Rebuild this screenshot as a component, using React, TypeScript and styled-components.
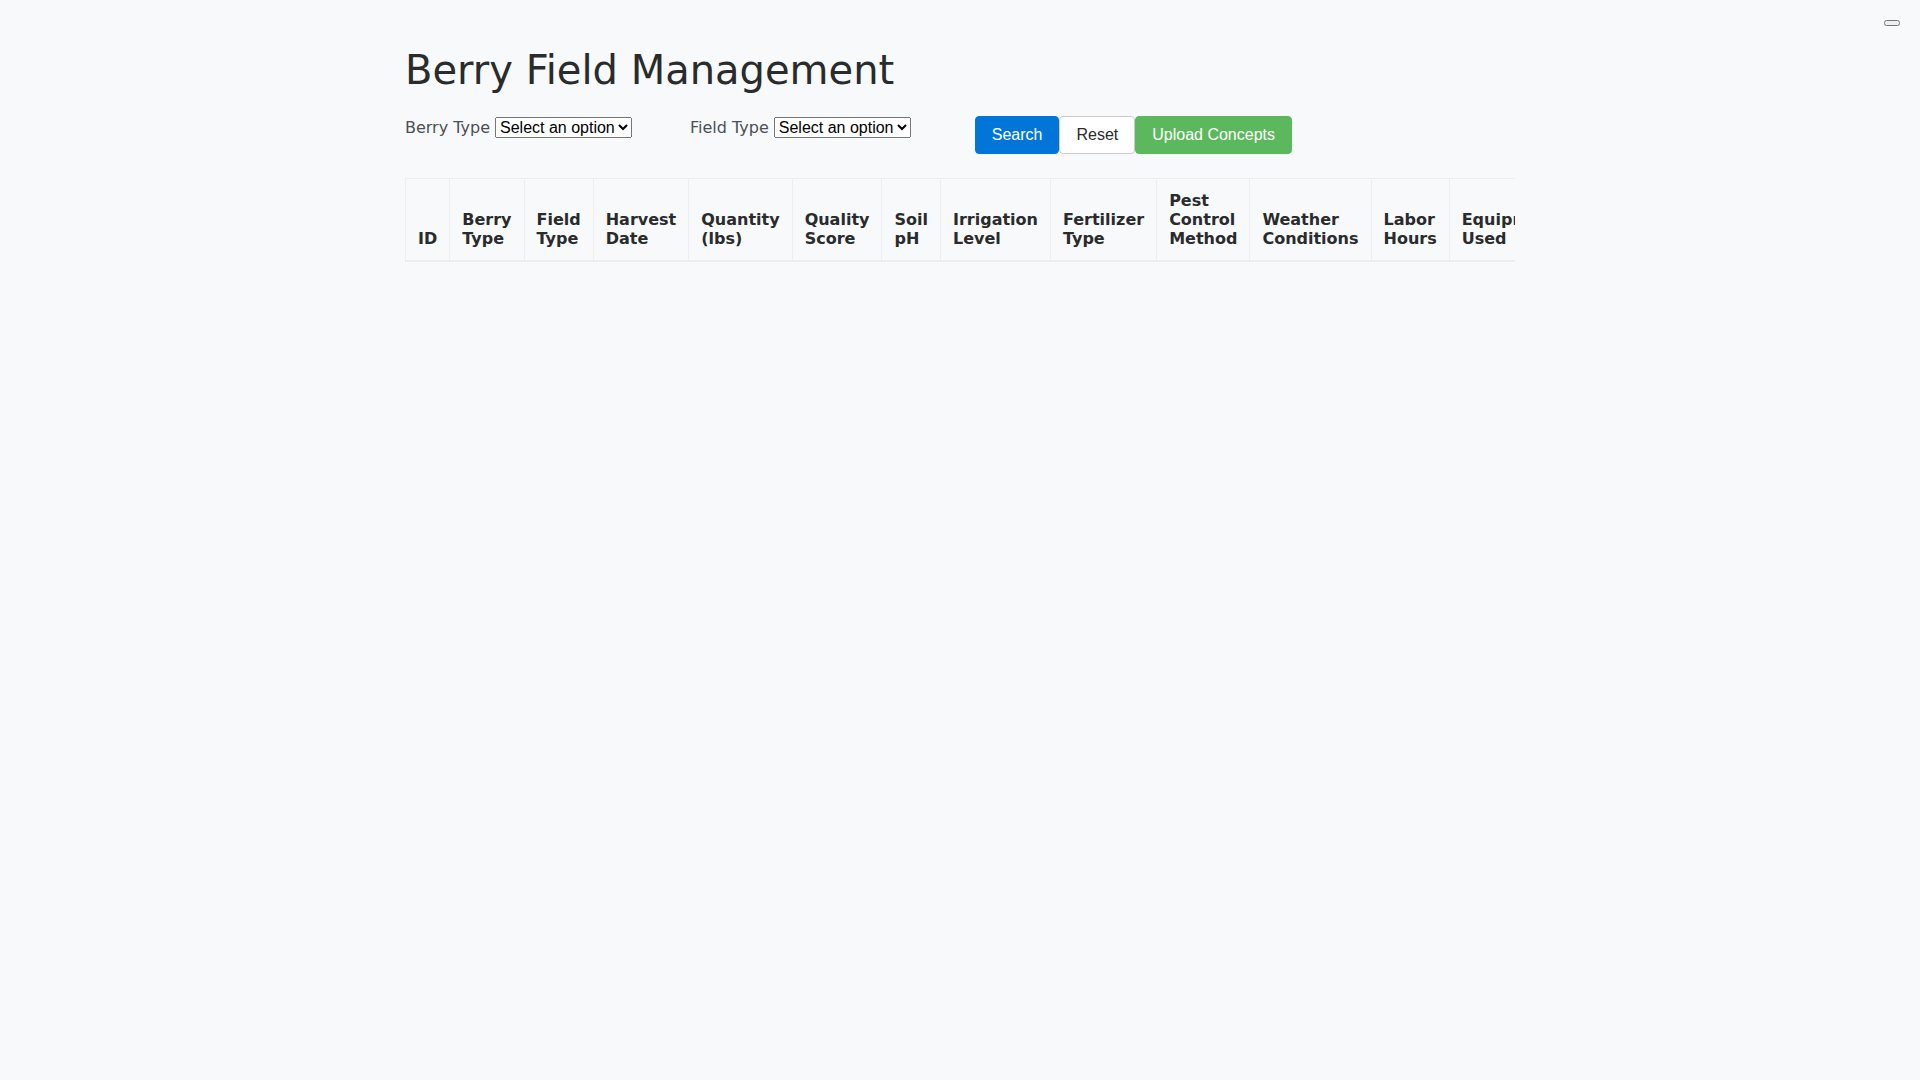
import React from "react";
import styled, { createGlobalStyle } from "styled-components";

const GlobalStyle = createGlobalStyle`
  html, body {
    margin: 0;
    padding: 0;
    background: #f8f9fa;
  }
  body {
    font-family: "DejaVu Sans", sans-serif;
    color: #292b2c;
    font-size: 16px;
  }
`;

const CornerButton = styled.button`
  position: absolute;
  top: 20px;
  right: 20px;
`;

const Container = styled.div`
  max-width: 1140px;
  margin: 0 auto;
  padding: 46px 15px 0;
  box-sizing: border-box;
`;

const Title = styled.h1`
  margin: 0;
  font-size: 40px;
  font-weight: 500;
  line-height: 48px;
  color: #292b2c;
`;

const Toolbar = styled.div`
  display: flex;
  align-items: flex-start;
  margin-top: 22px;
`;

const FilterGroup = styled.div<{ $trail: number }>`
  display: flex;
  align-items: baseline;
  gap: 5px;
  font-size: 16px;
  line-height: 23px;
  color: #495057;
  margin-right: ${(p) => p.$trail}px;
`;

const Select = styled.select`
  font-family: "Liberation Sans", Arial, sans-serif;
  font-size: 16px;
  color: #000;
`;

const ButtonRow = styled.div`
  display: flex;
`;

type Variant = "primary" | "secondary" | "success";

const palette: Record<Variant, { bg: string; border: string; color: string }> = {
  primary: { bg: "#0275d8", border: "#0275d8", color: "#fff" },
  secondary: { bg: "#fff", border: "#ccc", color: "#292b2c" },
  success: { bg: "#5cb85c", border: "#5cb85c", color: "#fff" },
};

const Button = styled.button<{ $variant: Variant }>`
  font-family: "Liberation Sans", Arial, sans-serif;
  font-size: 16px;
  line-height: 20px;
  padding: 8px 16px;
  border-radius: 4px;
  border: 1px solid ${(p) => palette[p.$variant].border};
  background: ${(p) => palette[p.$variant].bg};
  color: ${(p) => palette[p.$variant].color};
  cursor: pointer;
`;

const TableWrap = styled.div`
  margin-top: 24px;
  width: 100%;
  overflow: hidden;
`;

const Table = styled.table`
  width: 100%;
  border-collapse: collapse;
  border: 1px solid #eceeef;
`;

const HeadCell = styled.th`
  padding: 12px;
  vertical-align: bottom;
  text-align: left;
  font-weight: 700;
  font-size: 16px;
  line-height: 19px;
  color: #292b2c;
  border: 1px solid #eceeef;
  border-bottom: 2px solid #eceeef;
`;

const columns = [
  "ID",
  "Berry Type",
  "Field Type",
  "Harvest Date",
  "Quantity (lbs)",
  "Quality Score",
  "Soil pH",
  "Irrigation Level",
  "Fertilizer Type",
  "Pest Control Method",
  "Weather Conditions",
  "Labor Hours",
  "Equipment Used",
  "Notes",
];

export default function App() {
  return (
    <>
      <GlobalStyle />
      <CornerButton aria-label="toggle" />
      <Container>
        <Title>Berry Field Management</Title>
        <Toolbar>
          <FilterGroup $trail={58}>
            <label>Berry Type</label>
            <Select defaultValue="">
              <option value="">Select an option</option>
              <option value="strawberry">Strawberry</option>
              <option value="blueberry">Blueberry</option>
            </Select>
          </FilterGroup>
          <FilterGroup $trail={64}>
            <label>Field Type</label>
            <Select defaultValue="">
              <option value="">Select an option</option>
              <option value="open">Open Field</option>
              <option value="greenhouse">Greenhouse</option>
            </Select>
          </FilterGroup>
          <ButtonRow>
            <Button $variant="primary">Search</Button>
            <Button $variant="secondary">Reset</Button>
            <Button $variant="success">Upload Concepts</Button>
          </ButtonRow>
        </Toolbar>
        <TableWrap>
          <Table>
            <thead>
              <tr>
                {columns.map((c) => (
                  <HeadCell key={c}>{c}</HeadCell>
                ))}
              </tr>
            </thead>
            <tbody />
          </Table>
        </TableWrap>
      </Container>
    </>
  );
}
